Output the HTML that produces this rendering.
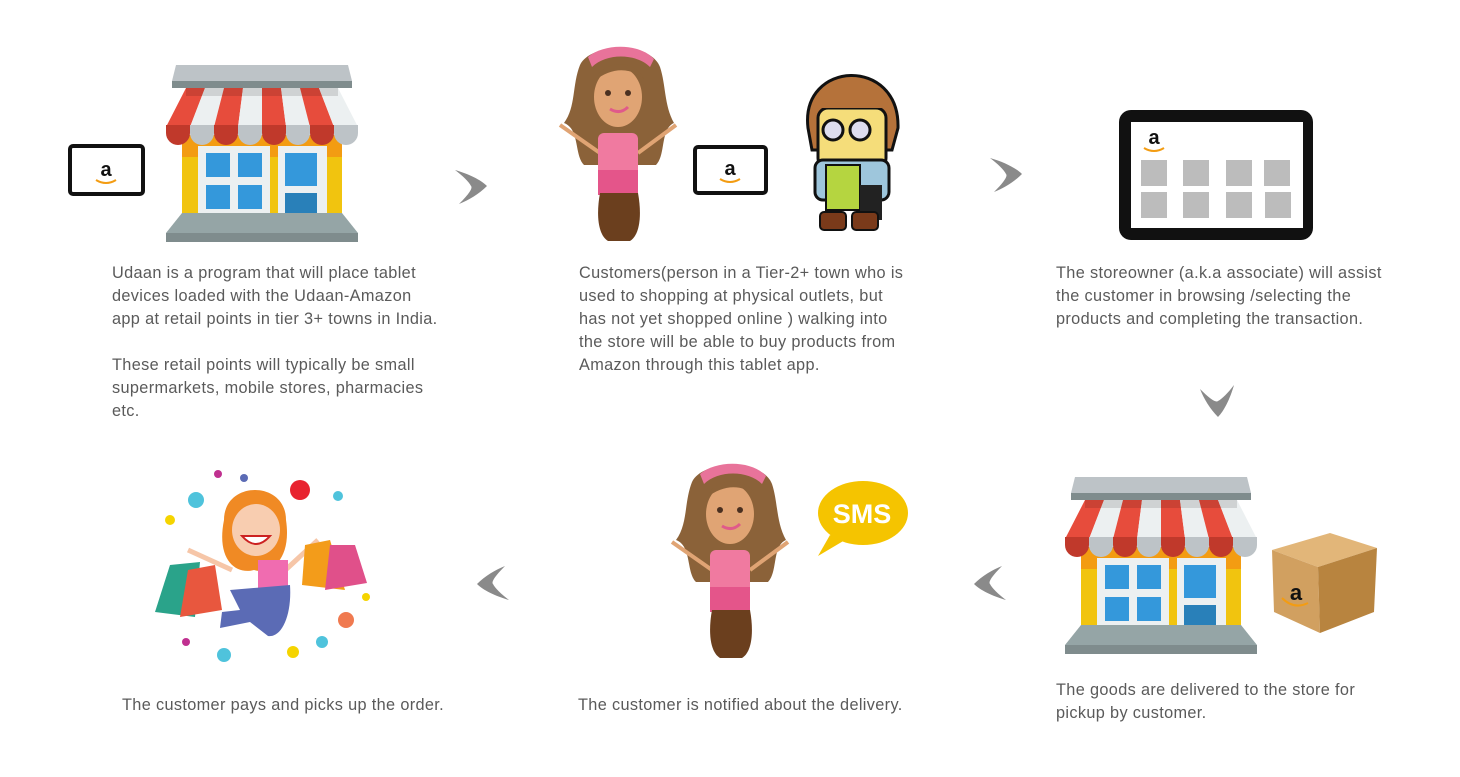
<!DOCTYPE html>
<html><head><meta charset="utf-8"><style>
html,body{margin:0;padding:0;background:#fff;}
body{width:1460px;height:777px;position:relative;overflow:hidden;font-family:"Liberation Sans",sans-serif;}
.t{position:absolute;font-size:16.3px;letter-spacing:0.35px;line-height:23px;color:#5a5a5a;white-space:nowrap;}
svg{position:absolute;left:0;top:0;}
</style></head><body>
<svg width="1460" height="777" viewBox="0 0 1460 777">
<defs>
<g id="store">
  <polygon points="10,0 182,0 186,16 6,16" fill="#bdc3c7"/>
  <rect x="6" y="16" width="180" height="7" fill="#7f8c8d"/>
  <rect x="16" y="70" width="160" height="91" fill="#f1c40f"/>
  <rect x="16" y="70" width="160" height="22" fill="#f39c12"/>
  <polygon points="20,23 39,23 24,62 0,62" fill="#e74c3c"/>
  <polygon points="39,23 58,23 48,62 24,62" fill="#ecf0f1"/>
  <polygon points="58,23 77,23 72,62 48,62" fill="#e74c3c"/>
  <polygon points="77,23 96,23 96,62 72,62" fill="#ecf0f1"/>
  <polygon points="96,23 115,23 120,62 96,62" fill="#e74c3c"/>
  <polygon points="115,23 134,23 144,62 120,62" fill="#ecf0f1"/>
  <polygon points="134,23 153,23 168,62 144,62" fill="#e74c3c"/>
  <polygon points="153,23 172,23 192,62 168,62" fill="#ecf0f1"/>
  <rect x="20" y="23" width="152" height="8" fill="#000" opacity="0.12"/>
  <g>
   <path d="M0,60 h24 v8 a12,12 0 0 1 -24,0z" fill="#c0392b"/>
   <path d="M24,60 h24 v8 a12,12 0 0 1 -24,0z" fill="#bdc3c7"/>
   <path d="M48,60 h24 v8 a12,12 0 0 1 -24,0z" fill="#c0392b"/>
   <path d="M72,60 h24 v8 a12,12 0 0 1 -24,0z" fill="#bdc3c7"/>
   <path d="M96,60 h24 v8 a12,12 0 0 1 -24,0z" fill="#c0392b"/>
   <path d="M120,60 h24 v8 a12,12 0 0 1 -24,0z" fill="#bdc3c7"/>
   <path d="M144,60 h24 v8 a12,12 0 0 1 -24,0z" fill="#c0392b"/>
   <path d="M168,60 h24 v8 a12,12 0 0 1 -24,0z" fill="#bdc3c7"/>
  </g>
  <rect x="32" y="81" width="72" height="71" fill="#ecf0f1"/>
  <rect x="40" y="88" width="24" height="24" fill="#3498db"/>
  <rect x="72" y="88" width="24" height="24" fill="#3498db"/>
  <rect x="40" y="120" width="24" height="24" fill="#3498db"/>
  <rect x="72" y="120" width="24" height="24" fill="#3498db"/>
  <rect x="112" y="81" width="49" height="84" fill="#ecf0f1"/>
  <rect x="119" y="88" width="32" height="33" fill="#3498db"/>
  <rect x="119" y="128" width="32" height="37" fill="#2980b9"/>
  <polygon points="16,148 176,148 192,168 0,168" fill="#95a5a6"/>
  <rect x="0" y="168" width="192" height="9" fill="#7f8c8d"/>
</g>
<g id="chev"><path d="M0,0 C14,4 26,10 32,16 C24,24 14,30 4,34 C14,24 18,18 16,16 C14,12 8,6 0,0z" fill="#8a8a8a"/></g>
<g id="woman">
  <path d="M20,20 C30,-2 90,-4 100,22 C106,40 104,60 114,78 C100,84 106,110 96,120 L24,120 C14,110 20,84 4,78 C16,62 12,40 20,20z" fill="#8b6239"/>
  <path d="M28,12 C44,-2 80,-2 94,14 L90,22 C76,8 46,8 32,22z" fill="#e8739a"/>
  <ellipse cx="58" cy="52" rx="24" ry="30" fill="#e0a474"/>
  <path d="M34,36 C44,14 74,14 84,34 C70,22 52,22 34,36z" fill="#8b6239"/>
  <circle cx="48" cy="48" r="3" fill="#4a3020"/><circle cx="68" cy="48" r="3" fill="#4a3020"/>
  <path d="M50,64 Q60,70 68,62" stroke="#e05a8a" stroke-width="3" fill="none"/>
  <path d="M0,80 L40,108 M116,80 L78,108" stroke="#e0a474" stroke-width="4"/>
  <rect x="38" y="88" width="40" height="62" rx="6" fill="#f07aa0"/>
  <rect x="38" y="125" width="40" height="25" fill="#e4558a"/>
  <path d="M40,148 L78,148 C82,170 80,190 70,196 L48,196 C38,190 36,170 40,148z" fill="#6b3f1e"/>
</g>
<g id="amz">
  <text x="0" y="0" font-family="Liberation Sans,sans-serif" font-weight="bold" font-size="20" text-anchor="middle" fill="#111">a</text>
  <path d="M-10,4 Q0,10 10,4" stroke="#f39c12" stroke-width="2" fill="none"/>
</g>
</defs>

<rect x="70" y="146" width="73" height="48" rx="3" fill="#fff" stroke="#111" stroke-width="4"/>
<use href="#amz" x="106" y="176"/>
<use href="#store" x="166" y="65"/>
<use href="#chev" x="455" y="170"/>

<use href="#woman" x="560" y="45"/>
<rect x="695" y="147" width="71" height="46" rx="3" fill="#fff" stroke="#111" stroke-width="4"/>
<use href="#amz" x="730" y="175"/>
<g>
 <path d="M808,128 C800,60 900,56 898,128 L892,150 L812,150z" fill="#b5723a" stroke="#111" stroke-width="3"/>
 <rect x="818" y="108" width="68" height="60" rx="10" fill="#f5dd7a" stroke="#111" stroke-width="3"/>
 <path d="M815,108 C820,80 880,78 890,108z" fill="#b5723a"/>
 <circle cx="833" cy="130" r="10" fill="#dde" stroke="#111" stroke-width="3"/>
 <circle cx="860" cy="130" r="10" fill="#dde" stroke="#111" stroke-width="3"/>
 <rect x="815" y="160" width="74" height="40" rx="8" fill="#9ec6dc" stroke="#111" stroke-width="3"/>
 <rect x="826" y="165" width="34" height="45" fill="#b5d540" stroke="#111" stroke-width="2"/>
 <rect x="860" y="185" width="22" height="35" fill="#222"/>
 <rect x="820" y="212" width="26" height="18" rx="4" fill="#7a3a1a" stroke="#111" stroke-width="2"/>
 <rect x="852" y="212" width="26" height="18" rx="4" fill="#7a3a1a" stroke="#111" stroke-width="2"/>
</g>
<use href="#chev" x="990" y="158"/>

<rect x="1119" y="110" width="194" height="130" rx="12" fill="#111"/>
<rect x="1131" y="122" width="172" height="106" fill="#fff"/>
<use href="#amz" x="1154" y="144"/>
<g fill="#bcbcbc">
 <rect x="1141" y="160" width="26" height="26"/><rect x="1183" y="160" width="26" height="26"/><rect x="1226" y="160" width="26" height="26"/><rect x="1264" y="160" width="26" height="26"/>
 <rect x="1141" y="192" width="26" height="26"/><rect x="1183" y="192" width="26" height="26"/><rect x="1226" y="192" width="26" height="26"/><rect x="1265" y="192" width="26" height="26"/>
</g>

<use href="#chev" transform="translate(1234,385) rotate(90)"/>

<use href="#store" x="1065" y="477"/>
<g>
 <polygon points="1272,550 1330,533 1377,548 1318,567" fill="#e2b679"/>
 <polygon points="1272,550 1318,567 1320,633 1274,612" fill="#d1a060"/>
 <polygon points="1318,567 1377,548 1374,612 1320,633" fill="#b8843f"/>
 <text x="1296" y="600" font-family="Liberation Sans,sans-serif" font-weight="bold" font-size="22" text-anchor="middle" fill="#111">a</text>
 <path d="M1282,598 Q1294,610 1308,603" stroke="#f39c12" stroke-width="2" fill="none"/>
</g>
<use href="#chev" transform="translate(1006,600) rotate(180)"/>

<use href="#woman" x="672" y="462"/>
<path d="M830,535 L818,556 L845,540z" fill="#f5c400"/>
<ellipse cx="863" cy="513" rx="45" ry="32" fill="#f5c400"/>
<text x="862" y="523" font-family="Liberation Sans,sans-serif" font-weight="bold" font-size="27" text-anchor="middle" fill="#fff">SMS</text>

<use href="#chev" transform="translate(509,600) rotate(180)"/>

<g>
 <path d="M188,550 L232,570 M318,540 L280,575" stroke="#f6c6a8" stroke-width="5"/>
 <polygon points="155,612 170,565 200,562 195,617" fill="#2aa38a"/>
 <polygon points="180,617 188,570 215,565 222,610" fill="#e8573e"/>
 <polygon points="302,585 305,545 330,540 345,590" fill="#f39c1a"/>
 <polygon points="325,590 330,545 355,545 367,583" fill="#e0508a"/>
 <path d="M224,520 C224,480 286,480 286,520 C292,560 270,575 254,570 C236,575 216,560 224,520z" fill="#f08a24"/>
 <ellipse cx="256" cy="530" rx="24" ry="26" fill="#f8cdb0"/>
 <path d="M242,536 Q256,552 270,536z" fill="#fff" stroke="#c22" stroke-width="2"/>
 <rect x="258" y="560" width="30" height="30" fill="#f06cb0"/>
 <path d="M230,590 L290,585 C292,615 282,638 268,636 L250,622 L220,628 L222,612 L240,610z" fill="#5b6bb5"/>
 <circle cx="218" cy="474" r="4" fill="#c03090"/><circle cx="244" cy="478" r="4" fill="#5b6bb5"/>
 <circle cx="300" cy="490" r="10" fill="#e8232f"/>
 <circle cx="196" cy="500" r="8" fill="#4fc3dc"/>
 <circle cx="170" cy="520" r="5" fill="#f5d400"/>
 <circle cx="338" cy="496" r="5" fill="#4fc3dc"/>
 <circle cx="346" cy="620" r="8" fill="#f07a50"/>
 <circle cx="224" cy="655" r="7" fill="#4fc3dc"/>
 <circle cx="293" cy="652" r="6" fill="#f5d400"/>
 <circle cx="322" cy="642" r="6" fill="#4fc3dc"/>
 <circle cx="186" cy="642" r="4" fill="#c03090"/>
 <circle cx="366" cy="597" r="4" fill="#f5d400"/>
</g>
</svg>

<div class="t" style="left:112px;top:262px;">Udaan is a program that will place tablet<br>devices loaded with the Udaan-Amazon<br>app at retail points in tier 3+ towns in India.<br><br>These retail points will typically be small<br>supermarkets, mobile stores, pharmacies<br>etc.</div>
<div class="t" style="left:579px;top:262px;">Customers(person in a Tier-2+ town who is<br>used to shopping at physical outlets, but<br>has not yet shopped online ) walking into<br>the store will be able to buy products from<br>Amazon through this tablet app.</div>
<div class="t" style="left:1056px;top:262px;">The storeowner (a.k.a associate) will assist<br>the customer in browsing /selecting the<br>products and completing the transaction.</div>
<div class="t" style="left:122px;top:694px;">The customer pays and picks up the order.</div>
<div class="t" style="left:578px;top:694px;">The customer is notified about the delivery.</div>
<div class="t" style="left:1056px;top:679px;">The goods are delivered to the store for<br>pickup by customer.</div>
</body></html>
